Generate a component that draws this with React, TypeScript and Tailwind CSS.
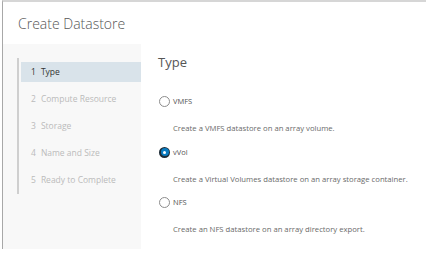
const steps = ['Type', 'Compute Resource', 'Storage', 'Name and Size', 'Ready to Complete']

function Radio({ checked }: { checked?: boolean }) {
  if (checked) {
    return (
      <span className="flex h-[11px] w-[11px] items-center justify-center rounded-full bg-[#1d2b36]">
        <span className="flex h-[8px] w-[8px] items-center justify-center rounded-full bg-[#0a7cc1]">
          <span className="h-[3px] w-[3px] rounded-full bg-white" />
        </span>
      </span>
    )
  }
  return <span className="h-[11px] w-[11px] rounded-full border border-[#8c8c8c] bg-white" />
}

function Option({ label, desc, checked, top }: { label: string; desc: string; checked?: boolean; top: string }) {
  return (
    <div className={top}>
      <div className="flex h-[12px] items-center gap-[3px] pl-[1px]">
        <Radio checked={checked} />
        <span className="text-[7.5px] leading-[12px] text-[#555]">{label}</span>
      </div>
      <p className="mt-[16px] pl-[15px] text-[7.7px] leading-[10px] text-[#6a6a6a]">{desc}</p>
    </div>
  )
}

export default function App() {
  return (
    <div className="h-[256px] w-[426px] overflow-hidden bg-white" style={{ fontFamily: '"Open Sans", "Liberation Sans", sans-serif' }}>
      <div className="ml-[2px] h-[249px] border-t-2 border-l border-t-[#d6d6d6] border-l-[#a8a8a8]">
        <div className="flex h-[42px] items-center pl-[15px]">
          <h1 className="text-[14px] font-light text-[#565656]">Create Datastore</h1>
        </div>
        <div className="flex h-[205px]">
          <div className="w-[138px] bg-[#f8f8f8] pt-[14px]">
            <nav className="ml-[14px] flex flex-col gap-[7px] border-l-2 border-[#cfcfcf] py-[4px] pl-[2px]">
              {steps.map((s, i) => (
                <div
                  key={s}
                  className={`flex h-[20px] items-center pl-[10px] text-[8.5px] ${i === 0 ? 'bg-[#d9e3ea] text-[#333]' : 'text-[#bbb]'}`}
                >
                  <span className="mr-[5px]">{i + 1}</span>
                  {s}
                </div>
              ))}
            </nav>
          </div>
          <div className="flex-1 pl-[17px] pt-[10px]">
            <h2 className="text-[13px] leading-[16px] text-[#565656]">Type</h2>
            <Option top="mt-[25px]" label="VMFS" desc="Create a VMFS datastore on an array volume." />
            <Option top="mt-[13px]" label="vVol" checked desc="Create a Virtual Volumes datastore on an array storage container." />
            <Option top="mt-[12px]" label="NFS" desc="Create an NFS datastore on an array directory export." />
          </div>
        </div>
      </div>
    </div>
  )
}
